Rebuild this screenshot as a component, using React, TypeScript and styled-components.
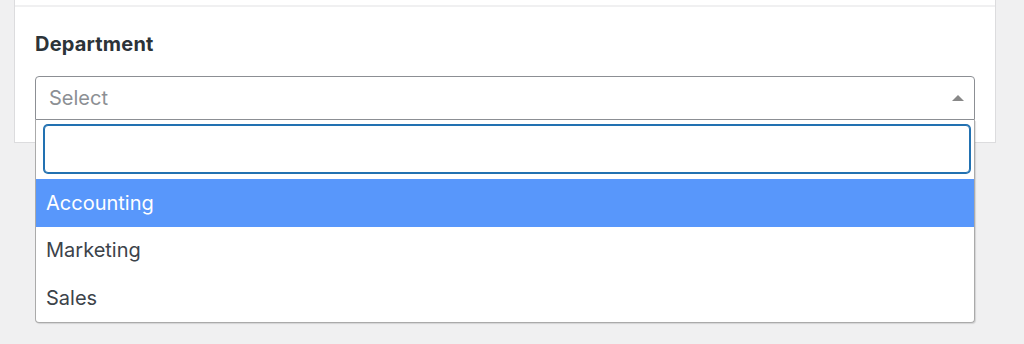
import React from "react";
import styled, { createGlobalStyle } from "styled-components";

const GlobalStyle = createGlobalStyle`
  html, body {
    margin: 0;
    padding: 0;
    background: #f0f0f1;
    font-family: Inter, "Noto Sans", "Liberation Sans", sans-serif;
    -webkit-font-smoothing: antialiased;
  }
`;

const Page = styled.div`
  padding: 0 28px 0 14px;
  height: 344px;
  box-sizing: border-box;
`;

const Card = styled.div`
  background: #fff;
  border: 1px solid #dcdcde;
  border-top: none;
  height: 143px;
  box-sizing: border-box;
  padding-top: 5px;
`;

const Divider = styled.div`
  height: 2px;
  background: #f0f0f1;
`;

const Field = styled.div`
  padding: 25px 20px 0 20px;
`;

const Label = styled.div`
  font-size: 20px;
  font-weight: 700;
  letter-spacing: 0.2px;
  color: #2c3338;
  line-height: 24px;
  margin-bottom: 20px;
`;

const SelectWrap = styled.div`
  position: relative;
`;

const Selection = styled.div<{ open?: boolean }>`
  height: 44px;
  box-sizing: border-box;
  border: 1px solid #8c8f94;
  border-radius: ${p => (p.open ? "4px 4px 0 0" : "4px")};
  display: flex;
  align-items: center;
  justify-content: space-between;
  padding: 0 10px 0 13px;
  background: #fff;
`;

const Placeholder = styled.span`
  font-size: 20px;
  color: #8c8f94;
`;

const Arrow = styled.span<{ up?: boolean }>`
  width: 0;
  height: 0;
  border-left: 6px solid transparent;
  border-right: 6px solid transparent;
  ${p =>
    p.up
      ? "border-bottom: 6px solid #888;"
      : "border-top: 6px solid #888;"}
`;

const Dropdown = styled.div`
  position: absolute;
  top: 100%;
  left: 0;
  right: 0;
  background: #fff;
  border: 1px solid #aaa;
  border-top: none;
  border-radius: 0 0 4px 4px;
  box-shadow: 1px 1px 1px rgba(0, 0, 0, 0.12);
  z-index: 10;
`;

const SearchBox = styled.div`
  padding: 5px 4px 6px 8px;
`;

const SearchInput = styled.input`
  display: block;
  width: 100%;
  height: 48px;
  box-sizing: border-box;
  border: 1px solid #2271b1;
  box-shadow: 0 0 0 1px #2271b1;
  border-radius: 4px;
  outline: none;
  font-size: 20px;
  font-family: inherit;
  padding: 0 10px;
`;

const Option = styled.div<{ highlighted?: boolean }>`
  height: 47.5px;
  display: flex;
  align-items: center;
  padding: 0 10px;
  font-size: 20px;
  color: ${p => (p.highlighted ? "#fff" : "#3c434a")};
  background: ${p => (p.highlighted ? "#5897fb" : "transparent")};
`;

const options = ["Accounting", "Marketing", "Sales"];

export default function App() {
  return (
    <>
      <GlobalStyle />
      <Page>
        <Card>
          <Divider />
          <Field>
            <Label>Department</Label>
            <SelectWrap>
              <Selection open>
                <Placeholder>Select</Placeholder>
                <Arrow up />
              </Selection>
              <Dropdown>
                <SearchBox>
                  <SearchInput type="text" />
                </SearchBox>
                {options.map((o, i) => (
                  <Option key={o} highlighted={i === 0}>
                    {o}
                  </Option>
                ))}
              </Dropdown>
            </SelectWrap>
          </Field>
        </Card>
      </Page>
    </>
  );
}
